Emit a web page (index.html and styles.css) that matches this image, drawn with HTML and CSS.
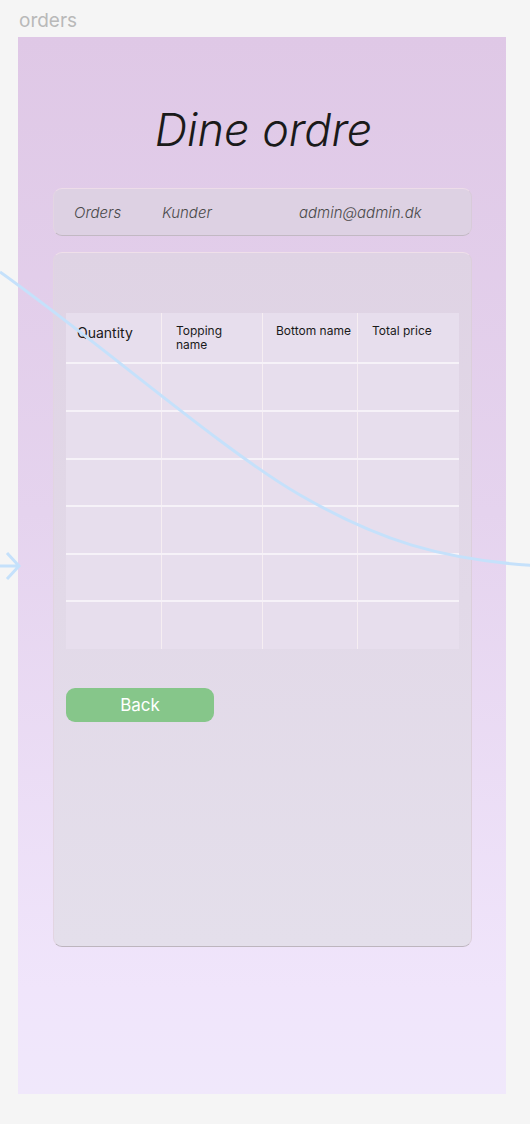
FILE: index.html
```html
<!DOCTYPE html>
<html lang="da">
<head>
<meta charset="utf-8">
<title>orders</title>
<link rel="stylesheet" href="styles.css">
</head>
<body>
<div class="canvas">
  <div class="frame-label">orders</div>
  <div class="frame">
    <h1 class="title">Dine ordre</h1>
    <nav class="nav">
      <span class="nav-item nav-orders">Orders</span>
      <span class="nav-item nav-kunder">Kunder</span>
      <span class="nav-item nav-user">admin@admin.dk</span>
    </nav>
    <section class="card">
      <div class="table">
        <div class="row head">
          <div class="cell c1 h-qty">Quantity</div>
          <div class="cell c2">Topping<br>name</div>
          <div class="cell c3">Bottom name</div>
          <div class="cell c4">Total price</div>
        </div>
        <div class="row r48"><div class="cell c1"></div><div class="cell c2"></div><div class="cell c3"></div><div class="cell c4"></div></div>
        <div class="row r48"><div class="cell c1"></div><div class="cell c2"></div><div class="cell c3"></div><div class="cell c4"></div></div>
        <div class="row r47"><div class="cell c1"></div><div class="cell c2"></div><div class="cell c3"></div><div class="cell c4"></div></div>
        <div class="row r48"><div class="cell c1"></div><div class="cell c2"></div><div class="cell c3"></div><div class="cell c4"></div></div>
        <div class="row r47"><div class="cell c1"></div><div class="cell c2"></div><div class="cell c3"></div><div class="cell c4"></div></div>
        <div class="row r48 last"><div class="cell c1"></div><div class="cell c2"></div><div class="cell c3"></div><div class="cell c4"></div></div>
      </div>
      <button class="back">Back</button>
    </section>
  </div>
</div>
<svg class="connector" width="530" height="1124" viewBox="0 0 530 1124" aria-hidden="true">
  <path d="M0,272 C100,343 222,450 300,495 S440,560 540,566" fill="none" stroke="#c5e1fb" stroke-width="3"/>
  <path d="M0,566 L19,566 M7,553 L19,566 L7,579" fill="none" stroke="#c5e1fb" stroke-width="3" stroke-linejoin="miter"/>
</svg>
</body>
</html>
```
FILE: styles.css
```css
* { box-sizing: border-box; }
html, body { margin: 0; padding: 0; }
body {
  background: #f5f5f5;
  font-family: Inter, "Noto Sans", "Liberation Sans", sans-serif;
  width: 530px;
  height: 1124px;
  overflow: hidden;
  position: relative;
}
.canvas {
  padding: 9px 0 0 18px;
}
.frame-label {
  font-size: 19px;
  line-height: 24px;
  color: #b9b9b9;
  height: 28px;
  padding-left: 1px;
}
.frame {
  width: 488px;
  height: 1057px;
  background: linear-gradient(180deg, #dfc8e6 0%, #e5d3ee 45%, #f0e5fb 90%, #f0e8fb 100%);
  padding: 64px 0 0 35px;
  display: flex;
  flex-direction: column;
}
.title {
  margin: 0;
  font-family: "Inter Light", Inter, "Noto Sans", sans-serif;
  font-size: 45px;
  line-height: 58px;
  font-weight: 200;
  font-style: italic;
  text-align: center;
  color: #1a1a1a;
  width: 419px;
  padding-left: 2px;
  height: 87px;
}
.nav {
  height: 48px;
  width: 419px;
  border-radius: 9px;
  background: #ddd1e3;
  border: 1px solid;
  border-color: #eddce8 #d8cbd9 #c2b9c3 #e3d5e2;
  display: flex;
  align-items: center;
  font-family: "Inter Light", Inter, "Noto Sans", sans-serif;
  font-style: italic;
  font-weight: 200;
  font-size: 15px;
  color: #4a4a4a;
}
.nav-orders { margin-left: 20px; width: 88px; }
.nav-kunder { width: 137px; }
.card {
  margin-top: 16px;
  width: 419px;
  height: 695px;
  border-radius: 9px;
  background: linear-gradient(180deg, #dfd3e4 0%, #e2d9e8 50%, #e4dfeb 100%);
  border: 1px solid;
  border-color: #efdfe9 #dccfdb #bdb5be #e2d5e1;
  padding: 60px 12px 0 12px;
}
.table {
  width: 393px;
  background: #e7deed;
}
.row {
  display: grid;
  grid-template-columns: 96px 101px 95px 101px;
  border-bottom: 2px solid #f6f2f8;
}
.head { height: 51px; }
.r48 { height: 48px; }
.r47 { height: 47px; }
.row.last { border-bottom: none; height: 47px; }
.cell {
  border-right: 1px solid #f6eef2;
  font-size: 12px;
  line-height: 14px;
  color: #1a1a1a;
  padding: 11px 0 0 14px;
}
.cell.c4 { border-right: none; }
.cell.c3 { padding-left: 13px; }
.h-qty {
  font-size: 14px;
  line-height: 17px;
  padding: 11px 0 0 11px;
}
.back {
  display: block;
  margin-top: 39px;
  width: 148px;
  height: 34px;
  border: none;
  border-radius: 9px;
  background: #86c68a;
  color: #fff;
  font-family: Inter, "Noto Sans", "Liberation Sans", sans-serif;
  font-size: 17px;
  font-weight: 400;
  padding: 0;
}
.connector {
  position: absolute;
  top: 0;
  left: 0;
  pointer-events: none;
}
```
